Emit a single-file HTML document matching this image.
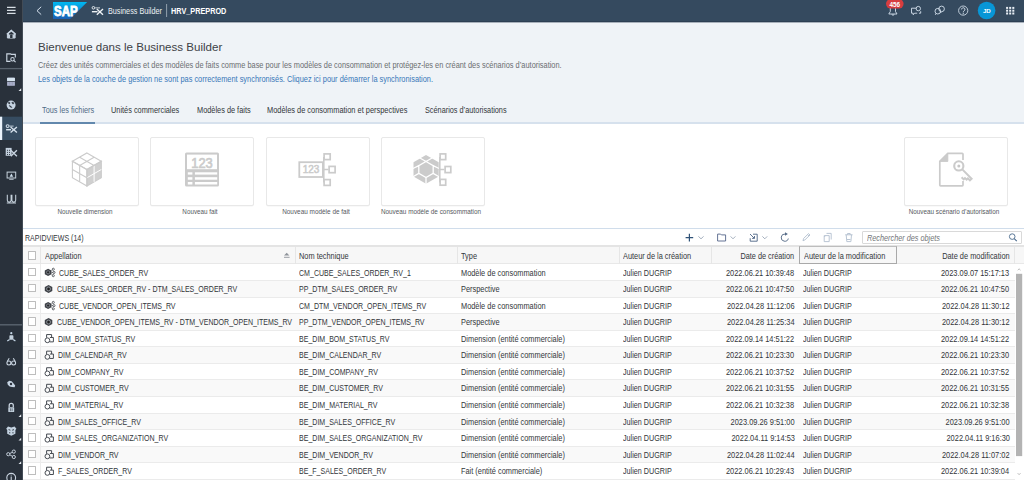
<!DOCTYPE html>
<html><head><meta charset="utf-8">
<style>
*{box-sizing:border-box;margin:0;padding:0}
html,body{width:1024px;height:480px;overflow:hidden;background:#eff3f7;font-family:"Liberation Sans",sans-serif;color:#32363a}
.a{position:absolute;white-space:nowrap;line-height:1}
svg{position:absolute;overflow:visible}
#side{position:absolute;left:0;top:0;width:23px;height:480px;background:#29313b}
#hdr{position:absolute;left:23px;top:0;width:1001px;height:22px;background:#354a5f;border-bottom:1px solid #2d3f53;box-shadow:0 1px 0 rgba(60,75,95,0.4)}
#tiles{position:absolute;left:23px;top:122px;width:1001px;height:107px;background:#fff;border-top:2px solid #d6e1ed}
#tbl{position:absolute;left:23px;top:228px;width:1001px;height:252px;background:#fff;border-top:1px solid #d0ddeb}
</style></head><body>
<div id="side">
 <svg style="left:0;top:0" width="23" height="480" viewBox="0 0 23 480" fill="none" stroke="#cbd6e2" stroke-width="1.1">
  <!-- hamburger -->
  <path d="M7 7.4h8.6M7 10.4h8.6M7 13.4h8.6" stroke="#d8dee4" stroke-width="1.15"/>
  <!-- home -->
  <path d="M7.4 38V33.9L11.3 30.4L15.1 33.9V38Z" fill="#c3cfdc" stroke="#c3cfdc" stroke-width="1"/>
  <path d="M6.8 34.3L11.3 30.2L15.7 34.3" stroke="#c8d5e2" stroke-width="1.2"/>
  <path d="M10.1 38V35.6A1.2 1.2 0 0 1 12.5 35.6V38Z" fill="#29313b" stroke="none"/>
  <path d="M9 33.6L11.3 31.7L13.6 33.6V34.4H9Z" fill="#29313b" stroke="none"/>
  <!-- folder search -->
  <path d="M15.3 57.4V54.3H11.2L10.4 53.8H6.8V61.3H10.5" stroke-width="1.15"/>
  <circle cx="12.5" cy="59.2" r="1.7" stroke-width="1.05"/><path d="M13.7 60.4L15.6 62.2" stroke-width="1.1"/>
  <!-- separator -->
  <path d="M0 68.6H22" stroke="#5a646f" stroke-width="1.3"/>
  <!-- data builder -->
  <rect x="7.1" y="77.8" width="7.8" height="8" rx="0.6" fill="#b2b8d4" stroke="none"/>
  <rect x="7.1" y="77.8" width="7.8" height="3.4" rx="0.6" fill="#d4e2ee" stroke="none"/>
  <path d="M7.1 81.6H14.9" stroke="#29313b" stroke-width="0.8"/>
  <path d="M9.7 82V85.8M12.3 82V85.8M7.1 83.9H14.9" stroke="#8d93a8" stroke-width="0.5"/>
  <path d="M21.2 88.3V91H18.5Z" fill="#e2e8ee" stroke="none"/>
  <!-- globe -->
  <circle cx="11.1" cy="105.1" r="4.5" fill="#c6d4e2" stroke="none"/>
  <path d="M8.3 102.6C9.3 101.8 10.2 102.3 9.8 103.4C9.4 104.3 8.6 104 8.3 102.6ZM11.8 102.5C12.8 101.9 14.2 102.6 13.8 103.6C13.2 104.4 11.9 103.6 11.8 102.5ZM9.3 105.5C10.3 105.8 11.5 106.6 12 107.5C11 107.6 9.5 106.8 9.3 105.5Z" fill="#29313b" stroke="#29313b" stroke-width="0.5"/>
  <!-- selected bg -->
  <rect x="0" y="116.7" width="22" height="23.3" fill="#364c61" stroke="none"/>
  <rect x="0" y="116.7" width="2.2" height="23.3" fill="#eaf3fc" stroke="none"/>
  <!-- business builder (selected) -->
  <circle cx="7.6" cy="126.1" r="1.45" stroke="#cfdce9" stroke-width="1.05"/>
  <path d="M9.5 126.1H13.6" stroke="#cfdce9" stroke-width="0.9"/>
  <path d="M6.1 129.7H11" stroke="#d4e0ec" stroke-width="1.5"/>
  <path d="M10.6 127L16.9 132.6M16.9 127L10.6 132.6" stroke="#d4e0ec" stroke-width="1.4"/>
  <!-- grid x -->
  <rect x="5.7" y="147.9" width="5.9" height="7.9" fill="#c3d0dd" stroke="none"/>
  <g fill="#29313b" stroke="none"><rect x="7" y="149.8" width="0.9" height="1"/><rect x="9.1" y="149.8" width="0.9" height="1"/><rect x="7" y="151.9" width="0.9" height="1"/><rect x="9.1" y="151.9" width="0.9" height="1"/><rect x="7" y="154" width="0.9" height="1"/><rect x="9.1" y="154" width="0.9" height="1"/></g>
  <path d="M10.8 150.3L16.9 156.3M16.9 150.3L10.8 156.3" stroke="#c8d4e0" stroke-width="1.35"/>
  <!-- monitor -->
  <rect x="7.1" y="172.1" width="8.6" height="5.9" stroke="#c6d2dc" stroke-width="1"/>
  <path d="M11.4 173.5L13.2 176.8H9.6Z" fill="#cfe0ee" stroke="none"/>
  <path d="M9.2 179.3H13.6" stroke="#c6d2dc" stroke-width="0.9"/>
  <!-- pipes -->
  <path d="M7.3 194.8V200.2A1.9 1.9 0 0 0 11.1 200.2V194.8M11.9 194.8V200.2A1.9 1.9 0 0 0 15.7 200.2V194.8M9.2 202V203M13.8 202V203M6.8 203H16" stroke="#c6d2dc" stroke-width="1.05"/>
  <!-- bottom separator -->
  <path d="M0 324.8H22" stroke="#5a646f" stroke-width="1.4"/>
  <!-- person network -->
  <circle cx="11.3" cy="333.2" r="1.1" fill="#c6d6e6" stroke="none"/>
  <rect x="9.4" y="335.2" width="4" height="4.6" rx="0.8" fill="#c3d0dc" stroke="none"/>
  <path d="M9.6 339.4L7.3 341M13.2 339.4L15.4 341" stroke="#c6d6e6" stroke-width="1.2"/>
  <!-- glasses -->
  <circle cx="8.9" cy="362.9" r="2" stroke-width="1.05"/><circle cx="13.6" cy="362.9" r="2" stroke-width="1.05"/>
  <path d="M7.2 361.6L9.2 358.3M15.3 361.6L13.3 358.3" stroke-width="1.05"/>
  <!-- gear x -->
  <path d="M7.2 382.3L9.3 380.8L11.6 381.3L13 382.8L15.2 385.6L14.6 387.3L12 387L9.7 386.4L7.8 384.8Z" fill="#c6d4e2" stroke="none"/>
  <circle cx="11" cy="384" r="1.2" fill="#29313b" stroke="none"/>
  <!-- lock -->
  <path d="M9.2 407.3V405.4A2.05 2.05 0 0 1 13.3 405.4V407.3" stroke-width="1.25"/>
  <rect x="8.3" y="407.3" width="5.9" height="4.8" rx="0.5" fill="#c3d1de" stroke="none"/>
  <path d="M10.4 408.3V411.2M12.1 408.3V411.2" stroke="#29313b" stroke-width="0.6"/>
  <path d="M21.2 414.3V417H18.5Z" fill="#e2e8ee" stroke="none"/>
  <!-- box -->
  <path d="M6.2 428.8L8 426.6L11.3 427.6L14.6 426.6L16.4 428.8L15.4 430V433.8L11.3 435.8L7.2 433.8V430Z" fill="#c3d2e0" stroke="none"/>
  <path d="M8.6 429.6L10.4 430.2M12.2 430.2L14 429.6M9 432.8H10.3M12.3 432.8H13.6" stroke="#29313b" stroke-width="0.9"/>
  <path d="M21.2 437.8V440.5H18.5Z" fill="#e2e8ee" stroke="none"/>
  <!-- share -->
  <circle cx="8.3" cy="454.2" r="1.6" stroke-width="0.95"/><circle cx="13.8" cy="451.6" r="1.6" stroke-width="0.95"/><circle cx="13.8" cy="457" r="1.6" stroke-width="0.95"/>
  <path d="M9.8 453.5L12.3 452.3M9.8 454.9L12.3 456.2" stroke-width="0.9"/>
  <path d="M21.2 461.3V464H18.5Z" fill="#e2e8ee" stroke="none"/>
  <!-- info -->
  <circle cx="11.2" cy="477.8" r="4.4" stroke-width="1.1"/><path d="M11.2 476.6V482M11.2 474.8V475.6" stroke-width="1.1"/>
  <path d="M22.5 0V480" stroke="#434c56" stroke-width="1"/>
 </svg>
</div>
<div id="hdr">
 <svg style="left:0;top:0" width="1001" height="22" viewBox="23 0 1001 22" fill="none">
  <path d="M41.2 6.8L37 10.7L41.2 14.6" stroke="#d7e3f0" stroke-width="1"/>
  <defs><linearGradient id="sapg" x1="0" y1="0" x2="0" y2="1"><stop offset="0" stop-color="#00b9f2"/><stop offset="1" stop-color="#1a5fb4"/></linearGradient></defs>
  <path d="M53 2H87.2L70.2 19H53Z" fill="url(#sapg)"/>
  <text x="54" y="15.9" font-family="Liberation Sans" font-weight="bold" font-size="14.6" fill="#fff" stroke="#fff" stroke-width="0.85" textLength="23.6" lengthAdjust="spacingAndGlyphs">SAP</text>
  <!-- BB icon -->
  <circle cx="93.4" cy="7.8" r="1.3" stroke="#e6ebf0" stroke-width="0.95"/><path d="M95.2 7.9H100" stroke="#e6ebf0" stroke-width="0.85"/><path d="M91.9 11.7H97.5" stroke="#eef2f5" stroke-width="1.4"/><path d="M96.8 9L103 14.8M103 9L96.8 14.8" stroke="#eef2f5" stroke-width="1.35"/>
  <path d="M166.6 4V17" stroke="#aab6c2" stroke-width="0.8"/>
 </svg>
 <svg style="left:0;top:0" width="1001" height="22" viewBox="23 0 1001 22" fill="none" stroke="#d4e0ec" stroke-width="0.9">
  <!-- bell -->
  <path d="M890.3 8V11.5L888.8 14H897L895.5 11.5V8M892 14.3A1 1 0 0 0 894 14.3"/>
  <rect x="886" y="-1" width="17.6" height="9.6" rx="4.8" fill="#d73d3f" stroke="none"/>
  <text x="894.8" y="6.7" text-anchor="middle" font-family="Liberation Sans" font-weight="bold" font-size="6.4" fill="#fff" stroke="none">456</text>
  <!-- chat -->
  <path d="M911.5 8.2H916.5M911.5 8.2V13.2H913.2V14.8L914.6 13.2H917.2M920.7 11.2V13.2H919" />
  <circle cx="918.3" cy="8.6" r="2.2"/>
  <!-- bubbles -->
  <circle cx="937.8" cy="11.2" r="2.8"/><circle cx="941.6" cy="8.9" r="2.8"/>
  <path d="M936 13.5L935.3 14.8M940.4 11.5L941 13"/>
  <!-- help -->
  <circle cx="963.2" cy="10.6" r="4.6" stroke-width="0.85"/>
  <path d="M961.6 9.4A1.65 1.65 0 1 1 964.3 10.7C963.5 11.2 963.25 11.6 963.25 12.4" stroke-width="1"/>
  <circle cx="963.25" cy="13.7" r="0.6" fill="#d4e0ec" stroke="none"/>
  <!-- avatar -->
  <circle cx="986.6" cy="10.5" r="8.8" fill="#0896d6" stroke="none"/>
  <text x="986.9" y="13.2" text-anchor="middle" font-family="Liberation Sans" font-weight="bold" font-size="5.9" fill="#fff" stroke="none" textLength="7.9" lengthAdjust="spacingAndGlyphs">JD</text>
  <!-- grid -->
  <g fill="#e8eef5" stroke="none"><rect x="1006.1" y="6.9" width="2" height="2"/><rect x="1009.2" y="6.9" width="2" height="2"/><rect x="1012.3" y="6.9" width="2" height="2"/><rect x="1006.1" y="9.7" width="2" height="2"/><rect x="1009.2" y="9.7" width="2" height="2"/><rect x="1012.3" y="9.7" width="2" height="2"/><rect x="1006.1" y="12.5" width="2" height="2"/><rect x="1009.2" y="12.5" width="2" height="2"/><rect x="1012.3" y="12.5" width="2" height="2"/></g>
 </svg>
</div>
<div id="tiles"></div>
<style>
.tile{position:absolute;top:136.5px;width:103.8px;height:69.5px;background:#fff;border:1px solid #e8e8e8;border-radius:2px;box-shadow:0 0.6px 0.6px rgba(0,0,0,0.05)}
.tl{position:absolute;top:208.8px;font-size:6.35px;color:#55595e;white-space:nowrap;line-height:1;text-align:center}
</style>
<div class="tile" style="left:35px"></div>
<div class="tile" style="left:150.4px"></div>
<div class="tile" style="left:265.8px"></div>
<div class="tile" style="left:381.2px"></div>
<div class="tile" style="left:903.8px"></div>
<svg style="left:0;top:0" width="1024" height="480" fill="none" stroke="#cbcbcb" stroke-width="1.1">
 <!-- cube -->
 <path d="M86.9 169.6L101.3 161.3V177.7L86.9 186Z" fill="#d0d0d0" stroke="#cbcbcb"/>
 <path d="M94.1 165.45V181.85M86.9 177.8L101.3 169.5" stroke="#fff" stroke-width="1"/>
 <path d="M86.9 153L101.3 161.3L86.9 169.6L72.4 161.3ZM79.65 157.15L94.1 165.45M94.1 157.15L79.65 165.45"/>
 <path d="M72.4 161.3L86.9 169.6V186L72.4 177.7ZM79.65 165.45V181.85M72.4 169.5L86.9 177.8"/>
 <!-- 123 table -->
 <rect x="185" y="152.6" width="34" height="33.9" rx="1.5" fill="#cbcbcb" stroke="none"/>
 <g fill="#fff" stroke="none">
  <rect x="187" y="154.6" width="30" height="14.6"/>
  <rect x="187.8" y="172.3" width="4.6" height="2.3"/><rect x="194.9" y="172.3" width="22.3" height="2.3"/>
  <rect x="187.8" y="177.2" width="4.6" height="2.5"/><rect x="194.9" y="177.2" width="22.3" height="2.5"/>
  <rect x="187.8" y="182" width="4.6" height="2.5"/><rect x="194.9" y="182" width="22.3" height="2.5"/>
 </g>
 <text x="202" y="167.7" text-anchor="middle" font-family="Liberation Sans" font-size="14.6" fill="#cbcbcb" stroke="#cbcbcb" stroke-width="0.7" textLength="21.5" lengthAdjust="spacingAndGlyphs">123</text>
 <!-- 123 model -->
 <rect x="299.3" y="162.2" width="23.6" height="14.8" stroke-width="1.8"/>
 <text x="311" y="173.2" text-anchor="middle" font-family="Liberation Sans" font-size="10.3" fill="#cbcbcb" stroke="#cbcbcb" stroke-width="0.55" textLength="16.6" lengthAdjust="spacingAndGlyphs">123</text>
 <path d="M323.8 157V182.5M323 169.5H328.5" stroke-width="1.6"/>
 <rect x="324.1" y="153.9" width="6.1" height="5.7" stroke-width="1.7"/>
 <rect x="329.1" y="166.4" width="6" height="6.3" stroke-width="1.7"/>
 <rect x="324.1" y="179.6" width="6.1" height="5.8" stroke-width="1.7"/>
 <!-- consumption model -->
 <path d="M426 155L438.7 162.2V176.6L426 183.8L413.5 176.6V162.2Z" fill="#cbcbcb" stroke="none"/>
 <path d="M426 161.5L433.2 165.6V173.4L426 177.5L418.8 173.4V165.6ZM426 161.5L419.5 157.8M426 161.5L432.5 157.8M418.8 173.4L413 176.8M433.2 173.4L439 176.8M426 177.5V184.5M413 168.5L418.8 165.6M439 168.5L433.2 165.6" stroke="#fff" stroke-width="1.3"/>
 <path d="M439.8 157V182.5M438.7 169.5H444.5" stroke-width="1.6"/>
 <rect x="440.1" y="153.9" width="5.6" height="5.7" stroke-width="1.7"/>
 <rect x="445.1" y="166.5" width="5.7" height="6.1" stroke-width="1.7"/>
 <rect x="440.1" y="179.4" width="5.6" height="5.8" stroke-width="1.7"/>
 <!-- doc key -->
 <path d="M963 160V154.2A0.8 0.8 0 0 0 962.2 153.4H947.8L939.8 161.4V185A0.8 0.8 0 0 0 940.6 185.8H962.2A0.8 0.8 0 0 0 963 185V181" stroke-width="1.7"/>
 <path d="M947.8 153.4V161.4H939.8Z" fill="#cbcbcb" stroke="#cbcbcb" stroke-width="1"/>
 <circle cx="958.8" cy="165.9" r="4.6" stroke-width="2.1"/>
 <circle cx="958.8" cy="165.9" r="1.5" fill="#c6c6c6" stroke="none"/>
 <path d="M962.3 169.4L971.6 178.7L969.9 180.4L967.9 178.4L966.6 179.7L965 178.1L963.7 179.4L961.6 177.3" stroke-width="2"/>
</svg>
<div id="tbl"></div>
<style>
.tx{position:absolute;white-space:nowrap;line-height:1;font-size:7.35px;color:#32363a}
.up{font-size:7.07px}
.dt{font-size:7.45px;text-align:right}
.cb{position:absolute;left:28px;width:8px;height:8.4px;border:1px solid #bdbdbd;background:#fff;border-radius:0.5px}
.rw{position:absolute;left:23px;width:991.6px;border-bottom:1px solid #ebebeb}
</style>
<!-- search -->
<div style="position:absolute;left:861.9px;top:230.6px;width:160px;height:13.6px;border:1px solid #d9d9d9;border-radius:1px;background:#fff"></div>

<div class="a" style="left:25.30px;top:235px;font-size:8.2px;color:#32363a;transform:scaleX(0.8585);transform-origin:0 0;">RAPIDVIEWS (14)</div>
<div class="a" style="left:867.00px;top:235px;font-size:8.2px;color:#737679; font-style:italic;transform:scaleX(0.8907);transform-origin:0 0;">Rechercher des objets</div>
<div style="position:absolute;left:23px;top:245.3px;width:1001px;height:19.2px;background:#f7f7f7;border-top:2px solid #e4e4e4;border-bottom:1px solid #e8e8e8"></div>
<div style="position:absolute;left:40.4px;top:246.5px;width:0.8px;height:17.5px;background:#e6e6e6"></div>
<div style="position:absolute;left:294.6px;top:246.5px;width:0.8px;height:17.5px;background:#e6e6e6"></div>
<div style="position:absolute;left:456.6px;top:246.5px;width:0.8px;height:17.5px;background:#e6e6e6"></div>
<div style="position:absolute;left:618.9px;top:246.5px;width:0.8px;height:17.5px;background:#e6e6e6"></div>
<div style="position:absolute;left:711px;top:246.5px;width:0.8px;height:17.5px;background:#e6e6e6"></div>
<div style="position:absolute;left:1014.2px;top:246.5px;width:0.8px;height:17.5px;background:#e6e6e6"></div>
<div class="cb" style="top:251.4px"></div>
<div class="a" style="left:45.00px;top:253px;font-size:8.2px;color:#32363a;transform:scaleX(0.9015);transform-origin:0 0;">Appellation</div>
<div class="a" style="left:299.10px;top:253px;font-size:8.2px;color:#32363a;transform:scaleX(0.9015);transform-origin:0 0;">Nom technique</div>
<div class="a" style="left:461.10px;top:253px;font-size:8.2px;color:#32363a;transform:scaleX(0.9015);transform-origin:0 0;">Type</div>
<div class="a" style="left:623.00px;top:253px;font-size:8.2px;color:#32363a;transform:scaleX(0.9015);transform-origin:0 0;">Auteur de la création</div>
<div class="a" style="left:803.70px;top:253px;font-size:8.2px;color:#32363a;transform:scaleX(0.9015);transform-origin:0 0;">Auteur de la modification</div>
<div class="a" style="right:230.20px;top:253px;font-size:8.2px;color:#32363a;transform:scaleX(0.8937);transform-origin:100% 0;">Date de création</div>
<div class="a" style="right:14.60px;top:253px;font-size:8.2px;color:#32363a;transform:scaleX(0.9044);transform-origin:100% 0;">Date de modification</div>
<div class="rw" style="top:264.42px;height:16.58px;background:#fff"></div>
<div class="cb" style="top:267.52px"></div>
<div class="a" style="left:58.80px;top:270px;font-size:8.2px;color:#32363a;transform:scaleX(0.8605);transform-origin:0 0;">CUBE_SALES_ORDER_RV</div>
<div class="a" style="left:299.10px;top:270px;font-size:8.2px;color:#32363a;transform:scaleX(0.8605);transform-origin:0 0;">CM_CUBE_SALES_ORDER_RV_1</div>
<div class="a" style="left:461.10px;top:270px;font-size:8.2px;color:#32363a;transform:scaleX(0.9024);transform-origin:0 0;">Modèle de consommation</div>
<div class="a" style="left:622.80px;top:270px;font-size:8.2px;color:#32363a;transform:scaleX(0.8780);transform-origin:0 0;">Julien DUGRIP</div>
<div class="a" style="right:229.50px;top:270px;font-size:8.2px;color:#32363a;transform:scaleX(0.9073);transform-origin:100% 0;">2022.06.21 10:39:48</div>
<div class="a" style="left:803.30px;top:270px;font-size:8.2px;color:#32363a;transform:scaleX(0.8780);transform-origin:0 0;">Julien DUGRIP</div>
<div class="a" style="right:14.50px;top:270px;font-size:8.2px;color:#32363a;transform:scaleX(0.9073);transform-origin:100% 0;">2023.09.07 15:17:13</div>
<div class="rw" style="top:281.00px;height:16.58px;background:#f9f9f9"></div>
<div class="cb" style="top:284.10px"></div>
<div class="a" style="left:57.00px;top:286px;font-size:8.2px;color:#32363a;transform:scaleX(0.8605);transform-origin:0 0;">CUBE_SALES_ORDER_RV - DTM_SALES_ORDER_RV</div>
<div class="a" style="left:299.10px;top:286px;font-size:8.2px;color:#32363a;transform:scaleX(0.8605);transform-origin:0 0;">PP_DTM_SALES_ORDER_RV</div>
<div class="a" style="left:461.10px;top:286px;font-size:8.2px;color:#32363a;transform:scaleX(0.9024);transform-origin:0 0;">Perspective</div>
<div class="a" style="left:622.80px;top:286px;font-size:8.2px;color:#32363a;transform:scaleX(0.8780);transform-origin:0 0;">Julien DUGRIP</div>
<div class="a" style="right:229.50px;top:286px;font-size:8.2px;color:#32363a;transform:scaleX(0.9073);transform-origin:100% 0;">2022.06.21 10:47:50</div>
<div class="a" style="left:803.30px;top:286px;font-size:8.2px;color:#32363a;transform:scaleX(0.8780);transform-origin:0 0;">Julien DUGRIP</div>
<div class="a" style="right:14.50px;top:286px;font-size:8.2px;color:#32363a;transform:scaleX(0.9073);transform-origin:100% 0;">2022.06.21 10:47:50</div>
<div class="rw" style="top:297.58px;height:16.58px;background:#fff"></div>
<div class="cb" style="top:300.68px"></div>
<div class="a" style="left:58.80px;top:303px;font-size:8.2px;color:#32363a;transform:scaleX(0.8605);transform-origin:0 0;">CUBE_VENDOR_OPEN_ITEMS_RV</div>
<div class="a" style="left:299.10px;top:303px;font-size:8.2px;color:#32363a;transform:scaleX(0.8605);transform-origin:0 0;">CM_DTM_VENDOR_OPEN_ITEMS_RV</div>
<div class="a" style="left:461.10px;top:303px;font-size:8.2px;color:#32363a;transform:scaleX(0.9024);transform-origin:0 0;">Modèle de consommation</div>
<div class="a" style="left:622.80px;top:303px;font-size:8.2px;color:#32363a;transform:scaleX(0.8780);transform-origin:0 0;">Julien DUGRIP</div>
<div class="a" style="right:229.50px;top:303px;font-size:8.2px;color:#32363a;transform:scaleX(0.9073);transform-origin:100% 0;">2022.04.28 11:12:06</div>
<div class="a" style="left:803.30px;top:303px;font-size:8.2px;color:#32363a;transform:scaleX(0.8780);transform-origin:0 0;">Julien DUGRIP</div>
<div class="a" style="right:14.50px;top:303px;font-size:8.2px;color:#32363a;transform:scaleX(0.9073);transform-origin:100% 0;">2022.04.28 11:30:12</div>
<div class="rw" style="top:314.16px;height:16.58px;background:#f9f9f9"></div>
<div class="cb" style="top:317.26px"></div>
<div class="a" style="left:57.00px;top:319px;font-size:8.2px;color:#32363a;transform:scaleX(0.8605);transform-origin:0 0;">CUBE_VENDOR_OPEN_ITEMS_RV - DTM_VENDOR_OPEN_ITEMS_RV</div>
<div class="a" style="left:299.10px;top:319px;font-size:8.2px;color:#32363a;transform:scaleX(0.8605);transform-origin:0 0;">PP_DTM_VENDOR_OPEN_ITEMS_RV</div>
<div class="a" style="left:461.10px;top:319px;font-size:8.2px;color:#32363a;transform:scaleX(0.9024);transform-origin:0 0;">Perspective</div>
<div class="a" style="left:622.80px;top:319px;font-size:8.2px;color:#32363a;transform:scaleX(0.8780);transform-origin:0 0;">Julien DUGRIP</div>
<div class="a" style="right:229.50px;top:319px;font-size:8.2px;color:#32363a;transform:scaleX(0.9073);transform-origin:100% 0;">2022.04.28 11:25:34</div>
<div class="a" style="left:803.30px;top:319px;font-size:8.2px;color:#32363a;transform:scaleX(0.8780);transform-origin:0 0;">Julien DUGRIP</div>
<div class="a" style="right:14.50px;top:319px;font-size:8.2px;color:#32363a;transform:scaleX(0.9073);transform-origin:100% 0;">2022.04.28 11:30:12</div>
<div class="rw" style="top:330.74px;height:16.58px;background:#fff"></div>
<div class="cb" style="top:333.84px"></div>
<div class="a" style="left:57.70px;top:336px;font-size:8.2px;color:#32363a;transform:scaleX(0.8605);transform-origin:0 0;">DIM_BOM_STATUS_RV</div>
<div class="a" style="left:299.10px;top:336px;font-size:8.2px;color:#32363a;transform:scaleX(0.8605);transform-origin:0 0;">BE_DIM_BOM_STATUS_RV</div>
<div class="a" style="left:461.10px;top:336px;font-size:8.2px;color:#32363a;transform:scaleX(0.9024);transform-origin:0 0;">Dimension (entité commerciale)</div>
<div class="a" style="left:622.80px;top:336px;font-size:8.2px;color:#32363a;transform:scaleX(0.8780);transform-origin:0 0;">Julien DUGRIP</div>
<div class="a" style="right:229.50px;top:336px;font-size:8.2px;color:#32363a;transform:scaleX(0.9073);transform-origin:100% 0;">2022.09.14 14:51:22</div>
<div class="a" style="left:803.30px;top:336px;font-size:8.2px;color:#32363a;transform:scaleX(0.8780);transform-origin:0 0;">Julien DUGRIP</div>
<div class="a" style="right:14.50px;top:336px;font-size:8.2px;color:#32363a;transform:scaleX(0.9073);transform-origin:100% 0;">2022.09.14 14:51:22</div>
<div class="rw" style="top:347.32px;height:16.58px;background:#f9f9f9"></div>
<div class="cb" style="top:350.42px"></div>
<div class="a" style="left:57.70px;top:352px;font-size:8.2px;color:#32363a;transform:scaleX(0.8605);transform-origin:0 0;">DIM_CALENDAR_RV</div>
<div class="a" style="left:299.10px;top:352px;font-size:8.2px;color:#32363a;transform:scaleX(0.8605);transform-origin:0 0;">BE_DIM_CALENDAR_RV</div>
<div class="a" style="left:461.10px;top:352px;font-size:8.2px;color:#32363a;transform:scaleX(0.9024);transform-origin:0 0;">Dimension (entité commerciale)</div>
<div class="a" style="left:622.80px;top:352px;font-size:8.2px;color:#32363a;transform:scaleX(0.8780);transform-origin:0 0;">Julien DUGRIP</div>
<div class="a" style="right:229.50px;top:352px;font-size:8.2px;color:#32363a;transform:scaleX(0.9073);transform-origin:100% 0;">2022.06.21 10:23:30</div>
<div class="a" style="left:803.30px;top:352px;font-size:8.2px;color:#32363a;transform:scaleX(0.8780);transform-origin:0 0;">Julien DUGRIP</div>
<div class="a" style="right:14.50px;top:352px;font-size:8.2px;color:#32363a;transform:scaleX(0.9073);transform-origin:100% 0;">2022.06.21 10:23:30</div>
<div class="rw" style="top:363.90px;height:16.58px;background:#fff"></div>
<div class="cb" style="top:367.00px"></div>
<div class="a" style="left:57.70px;top:369px;font-size:8.2px;color:#32363a;transform:scaleX(0.8605);transform-origin:0 0;">DIM_COMPANY_RV</div>
<div class="a" style="left:299.10px;top:369px;font-size:8.2px;color:#32363a;transform:scaleX(0.8605);transform-origin:0 0;">BE_DIM_COMPANY_RV</div>
<div class="a" style="left:461.10px;top:369px;font-size:8.2px;color:#32363a;transform:scaleX(0.9024);transform-origin:0 0;">Dimension (entité commerciale)</div>
<div class="a" style="left:622.80px;top:369px;font-size:8.2px;color:#32363a;transform:scaleX(0.8780);transform-origin:0 0;">Julien DUGRIP</div>
<div class="a" style="right:229.50px;top:369px;font-size:8.2px;color:#32363a;transform:scaleX(0.9073);transform-origin:100% 0;">2022.06.21 10:37:52</div>
<div class="a" style="left:803.30px;top:369px;font-size:8.2px;color:#32363a;transform:scaleX(0.8780);transform-origin:0 0;">Julien DUGRIP</div>
<div class="a" style="right:14.50px;top:369px;font-size:8.2px;color:#32363a;transform:scaleX(0.9073);transform-origin:100% 0;">2022.06.21 10:37:52</div>
<div class="rw" style="top:380.48px;height:16.58px;background:#f9f9f9"></div>
<div class="cb" style="top:383.58px"></div>
<div class="a" style="left:57.70px;top:385px;font-size:8.2px;color:#32363a;transform:scaleX(0.8605);transform-origin:0 0;">DIM_CUSTOMER_RV</div>
<div class="a" style="left:299.10px;top:385px;font-size:8.2px;color:#32363a;transform:scaleX(0.8605);transform-origin:0 0;">BE_DIM_CUSTOMER_RV</div>
<div class="a" style="left:461.10px;top:385px;font-size:8.2px;color:#32363a;transform:scaleX(0.9024);transform-origin:0 0;">Dimension (entité commerciale)</div>
<div class="a" style="left:622.80px;top:385px;font-size:8.2px;color:#32363a;transform:scaleX(0.8780);transform-origin:0 0;">Julien DUGRIP</div>
<div class="a" style="right:229.50px;top:385px;font-size:8.2px;color:#32363a;transform:scaleX(0.9073);transform-origin:100% 0;">2022.06.21 10:31:55</div>
<div class="a" style="left:803.30px;top:385px;font-size:8.2px;color:#32363a;transform:scaleX(0.8780);transform-origin:0 0;">Julien DUGRIP</div>
<div class="a" style="right:14.50px;top:385px;font-size:8.2px;color:#32363a;transform:scaleX(0.9073);transform-origin:100% 0;">2022.06.21 10:31:55</div>
<div class="rw" style="top:397.06px;height:16.58px;background:#fff"></div>
<div class="cb" style="top:400.16px"></div>
<div class="a" style="left:57.70px;top:402px;font-size:8.2px;color:#32363a;transform:scaleX(0.8605);transform-origin:0 0;">DIM_MATERIAL_RV</div>
<div class="a" style="left:299.10px;top:402px;font-size:8.2px;color:#32363a;transform:scaleX(0.8605);transform-origin:0 0;">BE_DIM_MATERIAL_RV</div>
<div class="a" style="left:461.10px;top:402px;font-size:8.2px;color:#32363a;transform:scaleX(0.9024);transform-origin:0 0;">Dimension (entité commerciale)</div>
<div class="a" style="left:622.80px;top:402px;font-size:8.2px;color:#32363a;transform:scaleX(0.8780);transform-origin:0 0;">Julien DUGRIP</div>
<div class="a" style="right:229.50px;top:402px;font-size:8.2px;color:#32363a;transform:scaleX(0.9073);transform-origin:100% 0;">2022.06.21 10:32:38</div>
<div class="a" style="left:803.30px;top:402px;font-size:8.2px;color:#32363a;transform:scaleX(0.8780);transform-origin:0 0;">Julien DUGRIP</div>
<div class="a" style="right:14.50px;top:402px;font-size:8.2px;color:#32363a;transform:scaleX(0.9073);transform-origin:100% 0;">2022.06.21 10:32:38</div>
<div class="rw" style="top:413.64px;height:16.58px;background:#f9f9f9"></div>
<div class="cb" style="top:416.74px"></div>
<div class="a" style="left:57.70px;top:419px;font-size:8.2px;color:#32363a;transform:scaleX(0.8605);transform-origin:0 0;">DIM_SALES_OFFICE_RV</div>
<div class="a" style="left:299.10px;top:419px;font-size:8.2px;color:#32363a;transform:scaleX(0.8605);transform-origin:0 0;">BE_DIM_SALES_OFFICE_RV</div>
<div class="a" style="left:461.10px;top:419px;font-size:8.2px;color:#32363a;transform:scaleX(0.9024);transform-origin:0 0;">Dimension (entité commerciale)</div>
<div class="a" style="left:622.80px;top:419px;font-size:8.2px;color:#32363a;transform:scaleX(0.8780);transform-origin:0 0;">Julien DUGRIP</div>
<div class="a" style="right:229.50px;top:419px;font-size:8.2px;color:#32363a;transform:scaleX(0.9073);transform-origin:100% 0;">2023.09.26 9:51:00</div>
<div class="a" style="left:803.30px;top:419px;font-size:8.2px;color:#32363a;transform:scaleX(0.8780);transform-origin:0 0;">Julien DUGRIP</div>
<div class="a" style="right:14.50px;top:419px;font-size:8.2px;color:#32363a;transform:scaleX(0.9073);transform-origin:100% 0;">2023.09.26 9:51:00</div>
<div class="rw" style="top:430.22px;height:16.58px;background:#fff"></div>
<div class="cb" style="top:433.32px"></div>
<div class="a" style="left:57.70px;top:435px;font-size:8.2px;color:#32363a;transform:scaleX(0.8605);transform-origin:0 0;">DIM_SALES_ORGANIZATION_RV</div>
<div class="a" style="left:299.10px;top:435px;font-size:8.2px;color:#32363a;transform:scaleX(0.8605);transform-origin:0 0;">BE_DIM_SALES_ORGANIZATION_RV</div>
<div class="a" style="left:461.10px;top:435px;font-size:8.2px;color:#32363a;transform:scaleX(0.9024);transform-origin:0 0;">Dimension (entité commerciale)</div>
<div class="a" style="left:622.80px;top:435px;font-size:8.2px;color:#32363a;transform:scaleX(0.8780);transform-origin:0 0;">Julien DUGRIP</div>
<div class="a" style="right:229.50px;top:435px;font-size:8.2px;color:#32363a;transform:scaleX(0.9073);transform-origin:100% 0;">2022.04.11 9:14:53</div>
<div class="a" style="left:803.30px;top:435px;font-size:8.2px;color:#32363a;transform:scaleX(0.8780);transform-origin:0 0;">Julien DUGRIP</div>
<div class="a" style="right:14.50px;top:435px;font-size:8.2px;color:#32363a;transform:scaleX(0.9073);transform-origin:100% 0;">2022.04.11 9:16:30</div>
<div class="rw" style="top:446.80px;height:16.58px;background:#f9f9f9"></div>
<div class="cb" style="top:449.90px"></div>
<div class="a" style="left:57.70px;top:452px;font-size:8.2px;color:#32363a;transform:scaleX(0.8605);transform-origin:0 0;">DIM_VENDOR_RV</div>
<div class="a" style="left:299.10px;top:452px;font-size:8.2px;color:#32363a;transform:scaleX(0.8605);transform-origin:0 0;">BE_DIM_VENDOR_RV</div>
<div class="a" style="left:461.10px;top:452px;font-size:8.2px;color:#32363a;transform:scaleX(0.9024);transform-origin:0 0;">Dimension (entité commerciale)</div>
<div class="a" style="left:622.80px;top:452px;font-size:8.2px;color:#32363a;transform:scaleX(0.8780);transform-origin:0 0;">Julien DUGRIP</div>
<div class="a" style="right:229.50px;top:452px;font-size:8.2px;color:#32363a;transform:scaleX(0.9073);transform-origin:100% 0;">2022.04.28 11:02:44</div>
<div class="a" style="left:803.30px;top:452px;font-size:8.2px;color:#32363a;transform:scaleX(0.8780);transform-origin:0 0;">Julien DUGRIP</div>
<div class="a" style="right:14.50px;top:452px;font-size:8.2px;color:#32363a;transform:scaleX(0.9073);transform-origin:100% 0;">2022.04.28 11:07:02</div>
<div class="rw" style="top:463.38px;height:16.58px;background:#fff"></div>
<div class="cb" style="top:466.48px"></div>
<div class="a" style="left:57.70px;top:468px;font-size:8.2px;color:#32363a;transform:scaleX(0.8605);transform-origin:0 0;">F_SALES_ORDER_RV</div>
<div class="a" style="left:299.10px;top:468px;font-size:8.2px;color:#32363a;transform:scaleX(0.8605);transform-origin:0 0;">BE_F_SALES_ORDER_RV</div>
<div class="a" style="left:461.10px;top:468px;font-size:8.2px;color:#32363a;transform:scaleX(0.9024);transform-origin:0 0;">Fait (entité commerciale)</div>
<div class="a" style="left:622.80px;top:468px;font-size:8.2px;color:#32363a;transform:scaleX(0.8780);transform-origin:0 0;">Julien DUGRIP</div>
<div class="a" style="right:229.50px;top:468px;font-size:8.2px;color:#32363a;transform:scaleX(0.9073);transform-origin:100% 0;">2022.06.21 10:29:43</div>
<div class="a" style="left:803.30px;top:468px;font-size:8.2px;color:#32363a;transform:scaleX(0.8780);transform-origin:0 0;">Julien DUGRIP</div>
<div class="a" style="right:14.50px;top:468px;font-size:8.2px;color:#32363a;transform:scaleX(0.9073);transform-origin:100% 0;">2022.06.21 10:39:04</div>
<div style="position:absolute;left:798.6px;top:245.9px;width:98.8px;height:18.3px;border:1px solid #a9a9a9;border-top-color:#bdbdbd"></div>
<div style="position:absolute;left:40.4px;top:264px;width:0.8px;height:216px;background:#ececec"></div>
<svg style="left:0;top:0" width="1024" height="480" fill="none">
<g transform="translate(0,272.35)"><path d="M48.1 -3.6L51.4 -1.8V1.8L48.1 3.6L44.8 1.8V-1.8Z" fill="#3d4046"/><circle cx="48.1" cy="0" r="1.6" stroke="#aeb3ba" stroke-width="0.5"/><circle cx="48.1" cy="0" r="0.8" fill="#222"/><circle cx="53.3" cy="-3.1" r="1.05" stroke="#44484e" stroke-width="0.8"/><circle cx="54" cy="0.1" r="1.05" stroke="#44484e" stroke-width="0.8"/><circle cx="53.3" cy="3.3" r="1.05" stroke="#44484e" stroke-width="0.8"/><path d="M51.4 -1.5L52.5 -2.3M51.4 0.1H53M51.4 1.6L52.5 2.5" stroke="#44484e" stroke-width="0.7"/></g>
<g transform="translate(0,288.93)"><path d="M48.55 -4L52.3 -2V2L48.55 4L44.8 2V-2Z" fill="#3d4046"/><circle cx="48.55" cy="0" r="2" stroke="#b3b8be" stroke-width="0.6"/><circle cx="48.55" cy="0" r="1" fill="#1e1e1e"/></g>
<g transform="translate(0,305.51)"><path d="M48.1 -3.6L51.4 -1.8V1.8L48.1 3.6L44.8 1.8V-1.8Z" fill="#3d4046"/><circle cx="48.1" cy="0" r="1.6" stroke="#aeb3ba" stroke-width="0.5"/><circle cx="48.1" cy="0" r="0.8" fill="#222"/><circle cx="53.3" cy="-3.1" r="1.05" stroke="#44484e" stroke-width="0.8"/><circle cx="54" cy="0.1" r="1.05" stroke="#44484e" stroke-width="0.8"/><circle cx="53.3" cy="3.3" r="1.05" stroke="#44484e" stroke-width="0.8"/><path d="M51.4 -1.5L52.5 -2.3M51.4 0.1H53M51.4 1.6L52.5 2.5" stroke="#44484e" stroke-width="0.7"/></g>
<g transform="translate(0,322.09)"><path d="M48.55 -4L52.3 -2V2L48.55 4L44.8 2V-2Z" fill="#3d4046"/><circle cx="48.55" cy="0" r="2" stroke="#b3b8be" stroke-width="0.6"/><circle cx="48.55" cy="0" r="1" fill="#1e1e1e"/></g>
<g transform="translate(0,338.67)" stroke="#464b52" stroke-width="1"><path d="M46.6 -0.9V-4.1H51.6V-1.2"/><circle cx="47.4" cy="1.6" r="2.4"/><path d="M49.9 -1.2H53.4V3.2H49.7"/></g>
<g transform="translate(0,355.25)" stroke="#464b52" stroke-width="1"><path d="M46.6 -0.9V-4.1H51.6V-1.2"/><circle cx="47.4" cy="1.6" r="2.4"/><path d="M49.9 -1.2H53.4V3.2H49.7"/></g>
<g transform="translate(0,371.83)" stroke="#464b52" stroke-width="1"><path d="M46.6 -0.9V-4.1H51.6V-1.2"/><circle cx="47.4" cy="1.6" r="2.4"/><path d="M49.9 -1.2H53.4V3.2H49.7"/></g>
<g transform="translate(0,388.41)" stroke="#464b52" stroke-width="1"><path d="M46.6 -0.9V-4.1H51.6V-1.2"/><circle cx="47.4" cy="1.6" r="2.4"/><path d="M49.9 -1.2H53.4V3.2H49.7"/></g>
<g transform="translate(0,404.99)" stroke="#464b52" stroke-width="1"><path d="M46.6 -0.9V-4.1H51.6V-1.2"/><circle cx="47.4" cy="1.6" r="2.4"/><path d="M49.9 -1.2H53.4V3.2H49.7"/></g>
<g transform="translate(0,421.57)" stroke="#464b52" stroke-width="1"><path d="M46.6 -0.9V-4.1H51.6V-1.2"/><circle cx="47.4" cy="1.6" r="2.4"/><path d="M49.9 -1.2H53.4V3.2H49.7"/></g>
<g transform="translate(0,438.15)" stroke="#464b52" stroke-width="1"><path d="M46.6 -0.9V-4.1H51.6V-1.2"/><circle cx="47.4" cy="1.6" r="2.4"/><path d="M49.9 -1.2H53.4V3.2H49.7"/></g>
<g transform="translate(0,454.73)" stroke="#464b52" stroke-width="1"><path d="M46.6 -0.9V-4.1H51.6V-1.2"/><circle cx="47.4" cy="1.6" r="2.4"/><path d="M49.9 -1.2H53.4V3.2H49.7"/></g>
<g transform="translate(0,471.31)" stroke="#464b52" stroke-width="1"><path d="M46.6 -0.9V-4.1H51.6V-1.2"/><circle cx="47.4" cy="1.6" r="2.4"/><path d="M49.9 -1.2H53.4V3.2H49.7"/></g>
<path d="M286.7 252.8L289.4 255.4H284Z" fill="#8e939a"/><path d="M284 257.3H289.6" stroke="#8e939a" stroke-width="0.9"/>
<g stroke-width="1.1">
<path d="M689.4 233.8V241.4M685.6 237.6H693.2" stroke="#2f5277" stroke-width="1.2"/>
<path d="M698.4 236.4L701 238.8L703.6 236.4" stroke="#7e8ea2" stroke-width="0.7"/>
<path d="M717.6 241V234.1H720.6L721.4 234.9H725.6V241Z" stroke="#5d6d8f" stroke-width="0.95"/>
<path d="M730.6 236.4L733 238.8L735.4 236.4" stroke="#7e8ea2" stroke-width="0.7"/>
<path d="M753 234.2H757.2V241.2H750.2V238.2M750 234L754.2 238.2M754.5 236V238.4H752.1" stroke="#4d6486" stroke-width="0.9"/>
<path d="M762.4 236.4L764.8 238.8L767.2 236.4" stroke="#7e8ea2" stroke-width="0.7"/>
<path d="M788.3 238.5A3.6 3.6 0 1 1 785.2 234.05" stroke="#566b88" stroke-width="0.95"/><path d="M785 232.3L787.9 234.1L785 235.8Z" fill="#566b88"/>
<path d="M803 240.8L803.6 238.4L808.6 233.6L810 235L805 239.8ZM807.6 234.6L809 236" stroke="#b2c0cf" stroke-width="0.9"/>
<path d="M826.5 233.4H831.2V239.5M824.2 235.6H829.2V241.6H824.2ZM824.2 237L825.6 235.6" stroke="#b2c0cf" stroke-width="0.9"/>
<path d="M845.2 234.8H852.6M846.2 234.8L846.8 241.6H850.9L851.5 234.8M847.5 234.8V233.5H850.2V234.8M847 239.5H850.5" stroke="#b2c0cf" stroke-width="0.9"/>
<circle cx="1012.2" cy="236.6" r="2.8" stroke="#4a6a8c" stroke-width="0.9"/><path d="M1014.2 238.6L1016.8 241.2" stroke="#4a6a8c" stroke-width="1.1"/>
</g>
<rect x="1015" y="264.2" width="9" height="215.8" fill="#fff"/><rect x="1016" y="273.8" width="6.2" height="182.3" fill="#b3b3b3"/><path d="M1017.7 270.2L1019.1 268.8L1020.5 270.2" stroke="#8a8a8a" stroke-width="0.6"/><path d="M1017.7 473.2L1019.1 474.6L1020.5 473.2" stroke="#8a8a8a" stroke-width="0.6"/>
</svg>
<div class="a" style="left:107.50px;top:8px;font-size:8.2px;color:#eef2f5;transform:scaleX(0.8839);transform-origin:0 0;">Business Builder</div>
<div class="a" style="left:170.50px;top:8px;font-size:8.2px;color:#ffffff; font-weight:bold;transform:scaleX(0.8898);transform-origin:0 0;">HRV_PREPROD</div>
<div class="a" style="left:38px;top:42px;font-size:11.55px;color:#3d4146">Bienvenue dans le Business Builder</div>
<div class="a" style="left:38.00px;top:62px;font-size:8.2px;color:#6a6d70;transform:scaleX(0.9024);transform-origin:0 0;">Créez des unités commerciales et des modèles de faits comme base pour les modèles de consommation et protégez-les en créant des scénarios d’autorisation.</div>
<div class="a" style="left:38.00px;top:76px;font-size:8.2px;color:#3777b8;transform:scaleX(0.9042);transform-origin:0 0;">Les objets de la couche de gestion ne sont pas correctement synchronisés. Cliquez ici pour démarrer la synchronisation.</div>
<div class="a" style="left:41.70px;top:107px;font-size:8.2px;color:#4f6b86;transform:scaleX(0.8966);transform-origin:0 0;">Tous les fichiers</div>
<div class="a" style="left:110.60px;top:107px;font-size:8.2px;color:#32363a;transform:scaleX(0.8985);transform-origin:0 0;">Unités commerciales</div>
<div class="a" style="left:196.50px;top:107px;font-size:8.2px;color:#32363a;transform:scaleX(0.8995);transform-origin:0 0;">Modèles de faits</div>
<div class="a" style="left:267.10px;top:107px;font-size:8.2px;color:#32363a;transform:scaleX(0.9044);transform-origin:0 0;">Modèles de consommation et perspectives</div>
<div class="a" style="left:425.00px;top:107px;font-size:8.2px;color:#32363a;transform:scaleX(0.8917);transform-origin:0 0;">Scénarios d’autorisations</div>
<div class="a" style="left:-214.70px;width:600px;text-align:center;top:209px;font-size:6.6px;color:#55595e;transform:scaleX(0.9580);transform-origin:50% 0;">Nouvelle dimension</div>
<div class="a" style="left:-99.65px;width:600px;text-align:center;top:209px;font-size:6.6px;color:#55595e;transform:scaleX(0.9520);transform-origin:50% 0;">Nouveau fait</div>
<div class="a" style="left:15.90px;width:600px;text-align:center;top:209px;font-size:6.6px;color:#55595e;transform:scaleX(0.9720);transform-origin:50% 0;">Nouveau modèle de fait</div>
<div class="a" style="left:130.90px;width:600px;text-align:center;top:209px;font-size:6.6px;color:#55595e;transform:scaleX(0.9650);transform-origin:50% 0;">Nouveau modèle de consommation</div>
<div class="a" style="left:653.90px;width:600px;text-align:center;top:209px;font-size:6.6px;color:#55595e;transform:scaleX(0.9610);transform-origin:50% 0;">Nouveau scénario d’autorisation</div>
<div style="position:absolute;left:39.8px;top:122px;width:55.6px;height:2px;background:#6288ad"></div>
</body></html>
